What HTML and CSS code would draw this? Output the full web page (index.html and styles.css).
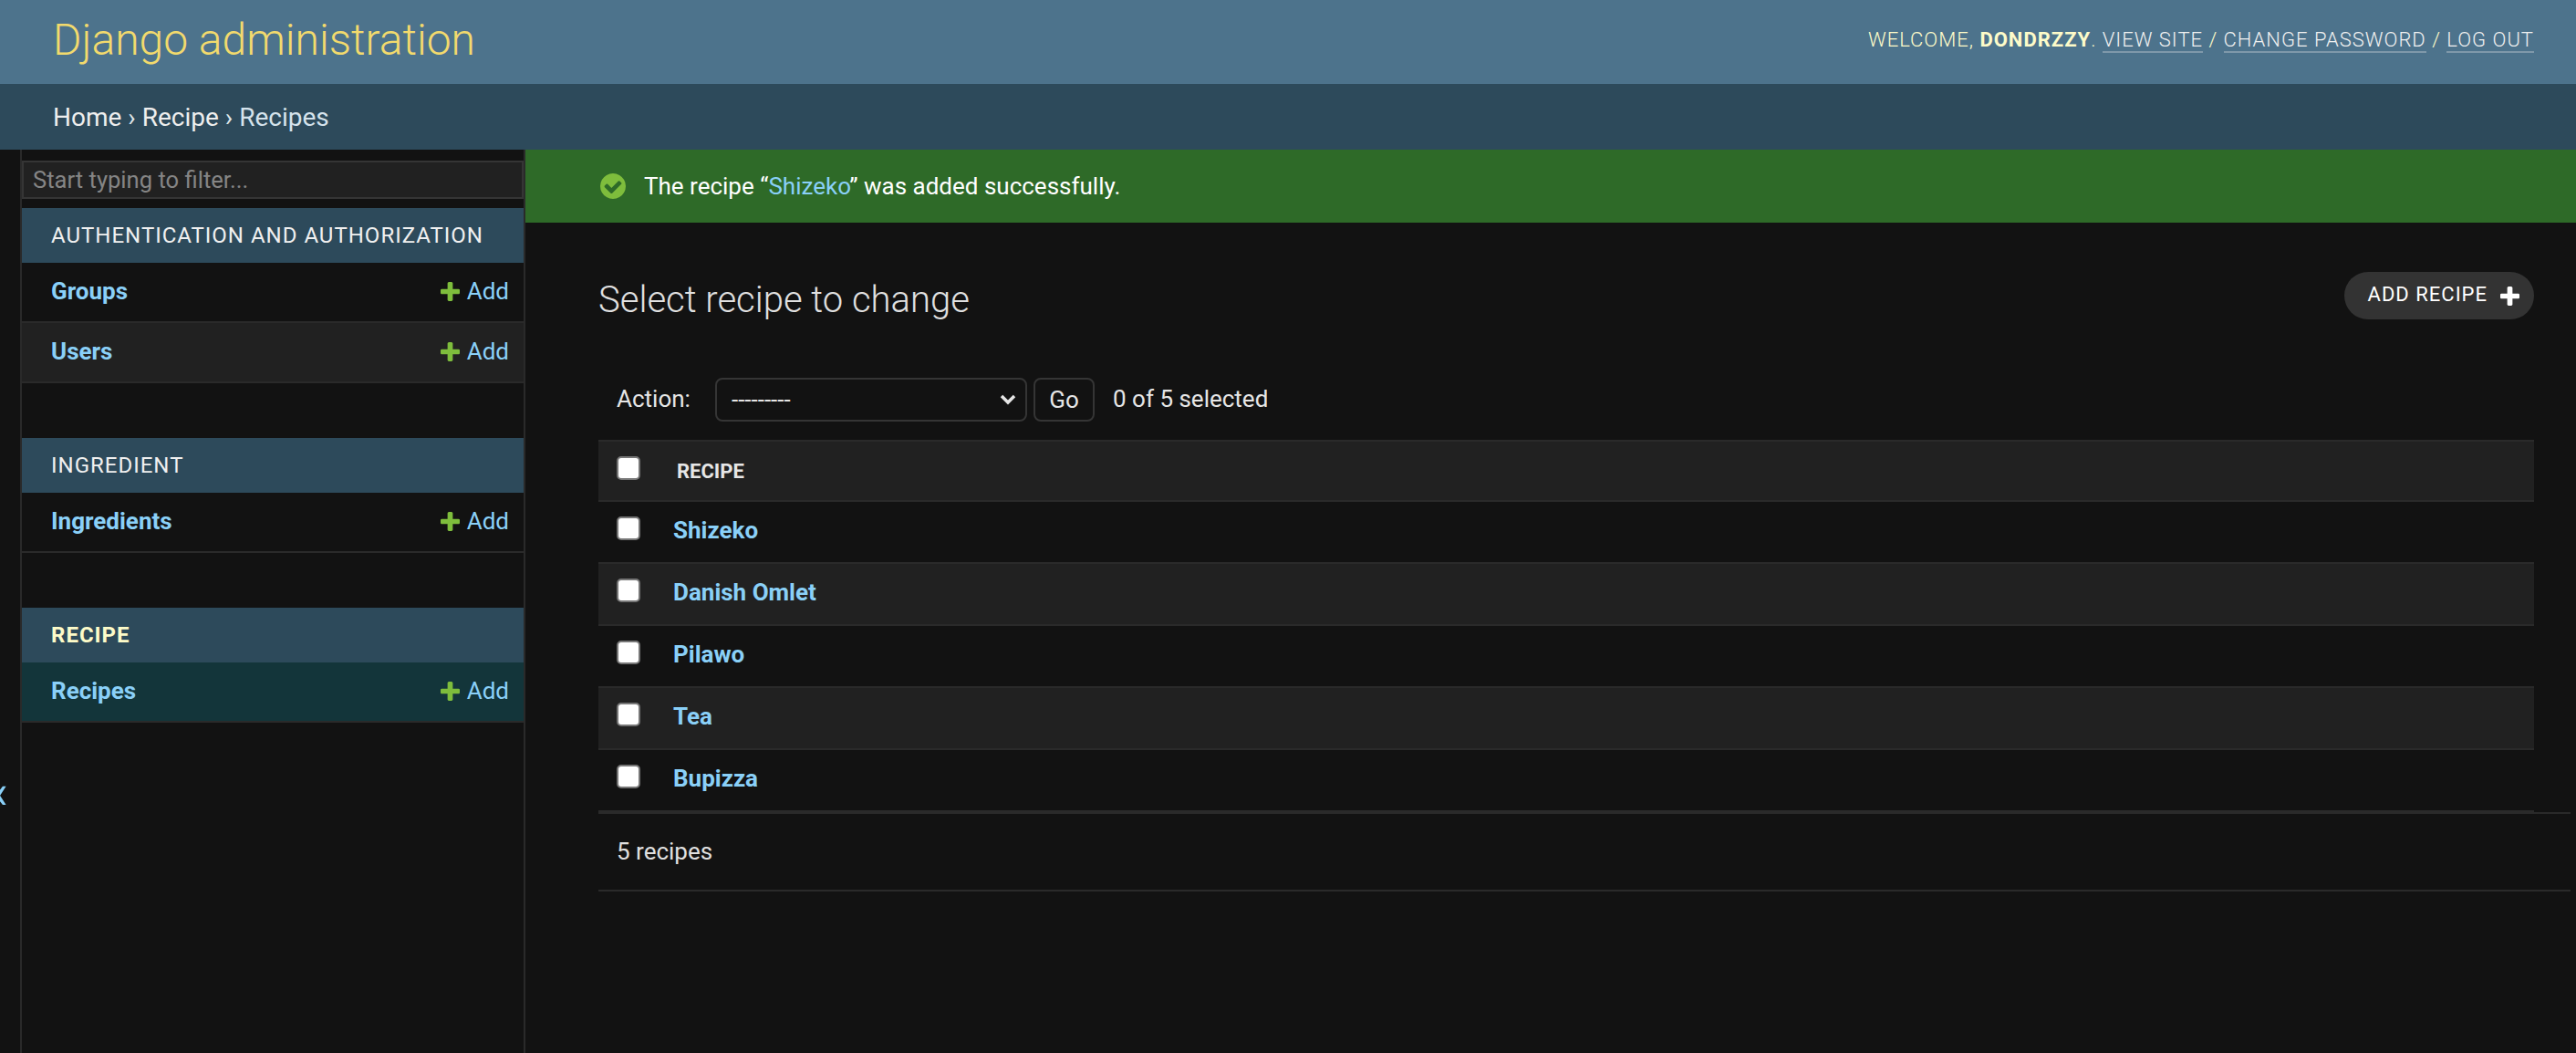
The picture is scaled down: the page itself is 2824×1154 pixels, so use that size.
FILE: index.html
```html
<!DOCTYPE html>
<html lang="en">
<head>
<meta charset="utf-8">
<title>Select recipe to change | Django site admin</title>
<link rel="stylesheet" href="styles.css">
</head>
<body>
<svg class="defs" aria-hidden="true"><symbol id="plus" viewBox="192 128 1408 1408"><path d="M1600 736v192q0 40-28 68t-68 28h-416v416q0 40-28 68t-68 28h-192q-40 0-68-28t-28-68v-416h-416q-40 0-68-28t-28-68v-192q0-40 28-68t68-28h416v-416q0-40 28-68t68-28h192q40 0 68 28t28 68v416h416q40 0 68 28t28 68z"/></symbol></svg>
<header class="site-header">
  <a class="brand" href="#">Django administration</a>
  <div class="user-tools">Welcome, <strong>dondrzzy</strong>. <a href="#">View site</a> / <a href="#">Change password</a> / <a href="#">Log out</a></div>
</header>
<nav class="breadcrumbs"><a href="#">Home</a> › <a href="#">Recipe</a> › <span class="crumb-current">Recipes</span></nav>
<div class="main">
  <button class="sidebar-toggle" type="button" aria-label="Toggle navigation">«</button>
  <aside class="sidebar">
    <input class="nav-filter" type="search" placeholder="Start typing to filter...">
    <section class="app">
      <h2 class="app-caption">Authentication and Authorization</h2>
      <div class="app-row"><a class="model" href="#">Groups</a><a class="add" href="#"><svg class="icon-plus"><use href="#plus"/></svg>Add</a></div>
      <div class="app-row alt"><a class="model" href="#">Users</a><a class="add" href="#"><svg class="icon-plus"><use href="#plus"/></svg>Add</a></div>
    </section>
    <section class="app">
      <h2 class="app-caption">Ingredient</h2>
      <div class="app-row"><a class="model" href="#">Ingredients</a><a class="add" href="#"><svg class="icon-plus"><use href="#plus"/></svg>Add</a></div>
    </section>
    <section class="app">
      <h2 class="app-caption current">Recipe</h2>
      <div class="app-row active"><a class="model" href="#">Recipes</a><a class="add" href="#"><svg class="icon-plus"><use href="#plus"/></svg>Add</a></div>
    </section>
  </aside>
  <main class="content-area">
    <div class="message">
      <svg class="icon-yes" viewBox="128 128 1536 1536"><path d="M1412 734q0-28-18-46l-91-90q-19-19-45-19t-45 19l-408 407-226-226q-19-19-45-19t-45 19l-91 90q-18 18-18 46 0 27 18 45l362 362q19 19 45 19 27 0 46-19l543-543q18-18 18-45zm252 162q0 209-103 385.5t-279.5 279.5-385.5 103-385.5-103-279.5-279.5-103-385.5 103-385.5 279.5-279.5 385.5-103 385.5 103 279.5 279.5 103 385.5z"/></svg>
      <span>The recipe “<a href="#">Shizeko</a>” was added successfully.</span>
    </div>
    <div class="content">
      <div class="title-row">
        <h1>Select recipe to change</h1>
        <a class="add-button" href="#">Add recipe<svg class="icon-plus"><use href="#plus"/></svg></a>
      </div>
      <div class="actions">
        <label class="action-label" for="action">Action:</label>
        <span class="select-wrap">
          <select id="action" class="action-select"><option>---------</option></select>
          <svg class="chevron" viewBox="0 0 18 12"><path d="M2 2l7 7 7-7"/></svg>
        </span>
        <button class="go" type="button">Go</button>
        <span class="counter">0 of 5 selected</span>
      </div>
      <table class="results">
        <thead><tr><th class="check-cell"><input class="check" type="checkbox"></th><th class="col-title">Recipe</th></tr></thead>
        <tbody>
          <tr><td class="check-cell"><input class="check" type="checkbox"></td><td><a href="#">Shizeko</a></td></tr>
          <tr><td class="check-cell"><input class="check" type="checkbox"></td><td><a href="#">Danish Omlet</a></td></tr>
          <tr><td class="check-cell"><input class="check" type="checkbox"></td><td><a href="#">Pilawo</a></td></tr>
          <tr><td class="check-cell"><input class="check" type="checkbox"></td><td><a href="#">Tea</a></td></tr>
          <tr><td class="check-cell"><input class="check" type="checkbox"></td><td><a href="#">Bupizza</a></td></tr>
        </tbody>
      </table>
      <p class="paginator">5 recipes</p>
    </div>
  </main>
</div>
</body>
</html>
```
FILE: styles.css
```css
* { box-sizing: border-box; }
html, body { margin: 0; height: 100%; }
body {
  display: flex;
  flex-direction: column;
  min-height: 100vh;
  overflow: hidden;
  background: #121212;
  color: #e6e6e6;
  font-family: Roboto, "Liberation Sans", sans-serif;
  font-size: 26px;
}
a { text-decoration: none; color: #8ad0f8; }
.defs { display: none; }

.site-header {
  flex: 0 0 92px;
  display: flex;
  justify-content: space-between;
  align-items: center;
  padding: 0 46px 0 58px;
  background: #4d738c;
}
.brand { font-size: 48px; font-weight: 300; color: #f2da6d; margin-top: -5px; }
.user-tools {
  font-size: 22px;
  font-weight: 300;
  letter-spacing: 1px;
  text-transform: uppercase;
  color: #fdfbc9;
  margin-top: -5px;
}
.user-tools strong { font-weight: 700; }
.user-tools a { color: #f0f0f0; border-bottom: 2px solid #7f98aa; }

.breadcrumbs {
  flex: 0 0 72px;
  padding: 1px 58px 0;
  line-height: 71px;
  font-size: 28px;
  background: #2d4a5b;
  color: #dfe6ea;
}
.breadcrumbs a { color: #eeeeee; }
.crumb-current { color: #d5e3ec; }

.main { flex: 1; display: flex; min-height: 0; }
.sidebar-toggle {
  flex: 0 0 24px;
  display: flex;
  justify-content: flex-end;
  align-items: flex-start;
  padding: 685px 13px 0 0;
  overflow: hidden;
  background: none;
  border: 0;
  border-right: 2px solid #2a2a2a;
  color: #8ad0f8;
  font: 52px/40px Roboto, sans-serif;
}
.sidebar {
  flex: 0 0 552px;
  border-right: 2px solid #2a2a2a;
  padding-top: 12px;
}
.nav-filter {
  display: block;
  width: 100%;
  height: 42px;
  margin-bottom: 10px;
  padding: 0 10px;
  background: #212121;
  border: 2px solid #353535;
  color: #e6e6e6;
  font: 25.6px Roboto, sans-serif;
  outline: 0;
}
.nav-filter::placeholder { color: #858585; opacity: 1; }
.app { margin-bottom: 60px; }
.app-caption {
  height: 60px;
  margin: 0;
  padding: 0 32px;
  line-height: 60px;
  font-size: 24px;
  font-weight: 400;
  letter-spacing: 1px;
  text-transform: uppercase;
  white-space: nowrap;
  background: #2d4a5b;
  color: #f0f0f0;
}
.app-caption.current { font-weight: 700; color: #fdfbc9; }
.app-row {
  height: 66px;
  display: flex;
  justify-content: space-between;
  align-items: flex-start;
  padding: 11px 16px 0 32px;
  line-height: 40px;
  border-bottom: 2px solid #2a2a2a;
}
.app-row.alt { background: #212121; }
.app-row.active { background: #13353a; }
.model { font-weight: 700; }
.add { display: flex; align-items: center; gap: 8px; }
.icon-plus { width: 21px; height: 21px; fill: #7ebd3c; }

.content-area { flex: 1; min-width: 0; }
.message {
  height: 80px;
  display: flex;
  align-items: center;
  gap: 20px;
  padding-left: 82px;
  background: #2e6a28;
  color: #fff;
  font-size: 26px;
}
.icon-yes { width: 28px; height: 28px; fill: #7ebd3c; }
.content { padding: 54px 46px 0 80px; }
.title-row { display: flex; justify-content: space-between; align-items: flex-start; }
h1 {
  margin: 0;
  padding-top: 5px;
  line-height: 52px;
  font-size: 40px;
  font-weight: 300;
  color: #e0e0e0;
}
.add-button {
  height: 52px;
  display: flex;
  align-items: center;
  gap: 14px;
  padding: 0 16px 4px 26px;
  border-radius: 26px;
  background: #333333;
  color: #fff;
  font-size: 22px;
  letter-spacing: 1px;
  text-transform: uppercase;
}
.add-button .icon-plus { fill: #fff; margin-top: 4px; }

.actions {
  display: flex;
  align-items: center;
  height: 48px;
  margin-top: 59px;
  padding-left: 20px;
}
.action-label { width: 108px; padding-bottom: 2px; }
.select-wrap { position: relative; display: block; width: 342px; height: 48px; }
.action-select {
  width: 100%;
  height: 100%;
  padding: 0 16px;
  appearance: none;
  background: #121212;
  border: 2px solid #353535;
  border-radius: 8px;
  color: #e6e6e6;
  font: 26px Roboto, sans-serif;
}
.chevron {
  position: absolute;
  right: 12px;
  top: 18px;
  width: 18px;
  height: 12px;
  fill: none;
  stroke: #e6e6e6;
  stroke-width: 3.5;
}
.go {
  width: 67px;
  height: 48px;
  margin-left: 7px;
  padding: 0;
  background: #121212;
  border: 2px solid #353535;
  border-radius: 8px;
  color: #e6e6e6;
  font: 26px Roboto, sans-serif;
}
.counter { margin-left: 20px; padding-bottom: 2px; }

.results {
  width: 100%;
  margin-top: 20px;
  border-collapse: separate;
  border-spacing: 0;
}
.results th, .results td {
  height: 68px;
  padding: 11px 0 0;
  vertical-align: top;
  text-align: left;
  line-height: 40px;
  border-bottom: 2px solid #2a2a2a;
}
.results thead th {
  background: #212121;
  border-top: 2px solid #2a2a2a;
  font-size: 22px;
  font-weight: 700;
  text-transform: uppercase;
  color: #e6e6e6;
}
.results tbody tr:nth-child(even) td { background: #212121; }
.results td a { font-weight: 700; }
.results .check-cell { width: 82px; padding: 16px 0 0 20px; line-height: 0; }
.results thead .check-cell { padding-top: 16px; }
.results .col-title { padding-left: 4px; padding-top: 13px; }
.check {
  appearance: none;
  display: block;
  width: 26px;
  height: 26px;
  margin: 0;
  background: #fff;
  border: 2px solid #767676;
  border-radius: 5px;
}
.paginator {
  height: 87px;
  margin: 0 -40px 0 0;
  padding-left: 20px;
  line-height: 82px;
  border-top: 2px solid #2a2a2a;
  border-bottom: 2px solid #2a2a2a;
  color: #e0e0e0;
}
```
